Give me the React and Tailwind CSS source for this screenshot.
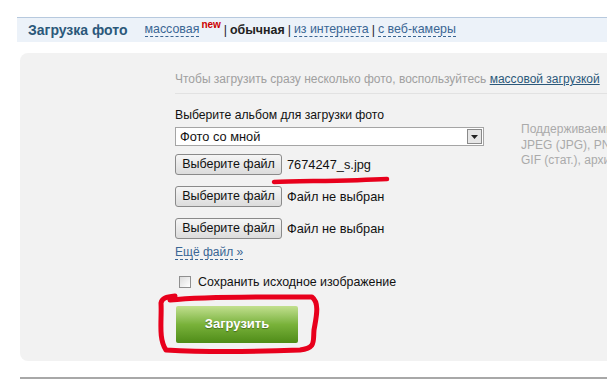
import React from "react";

function FileRow({ name }) {
  return (
    <div className="flex items-center h-[21px]">
      <button className="h-[21px] w-[107px] rounded-[3px] border border-[#8a8a8a] bg-gradient-to-b from-[#f6f6f6] to-[#dcdcdc] text-[12.5px] text-[#111] leading-none">
        Выберите файл
      </button>
      <span className="ml-[5px] text-[12.8px] text-[#111]">{name}</span>
    </div>
  );
}

export default function App() {
  return (
    <div
      className="relative w-[607px] h-[392px] overflow-hidden bg-white pt-[17px]"
      style={{ fontFamily: '"Liberation Sans", Arial, sans-serif' }}
    >
      {/* header bar */}
      <div className="ml-[17px] h-[25px] border-t border-[#b7c9de] bg-[#ecf2f9] flex items-center pl-[11px] whitespace-nowrap">
        <span className="text-[14px] font-bold text-[#2b587a]">Загрузка фото</span>
        <div className="ml-[17px] flex items-center text-[12.4px] text-[#222]">
          <span className="text-[#3a6694] border-b border-dashed border-[#3a6694] leading-[13px]">массовая</span>
          <sup className="text-[10px] font-bold text-[#c00] -top-[5px] ml-[2px]">new</sup>
          <span className="mx-[3px]">|</span>
          <span className="font-bold">обычная</span>
          <span className="mx-[3px]">|</span>
          <span className="text-[#3a6694] border-b border-dashed border-[#3a6694] leading-[13px]">из интернета</span>
          <span className="mx-[3px]">|</span>
          <span className="text-[#3a6694] border-b border-dashed border-[#3a6694] leading-[13px]">с веб-камеры</span>
        </div>
      </div>

      {/* gray panel */}
      <div className="ml-[20px] mt-[11px] h-[308px] rounded-l-[8px] bg-[#f2f2f2] pl-[155px] pt-[19px] flex">
        <div className="w-[346px] shrink-0">
          <div className="whitespace-nowrap text-[12px] text-[#a0a0a0] h-[14px] leading-[14px]">
            Чтобы загрузить сразу несколько фото, воспользуйтесь{" "}
            <span className="text-[#2b587a] underline">массовой загрузкой</span>
          </div>
          <div className="mt-[7px] w-[432px] border-t border-[#e2e2e2]" />
          <div className="mt-[14px] text-[12.2px] text-[#111] leading-[14px] whitespace-nowrap">
            Выберите альбом для загрузки фото
          </div>
          <div className="mt-[5px] w-[309px] h-[19px] border border-[#a5a5a5] bg-white flex items-center">
            <span className="flex-1 pl-[4px] text-[12.8px] text-[#111]">Фото со мной</span>
            <div className="w-[15px] h-[15px] mr-[1px] border border-[#8a8a8a] bg-[#e6e6e6] flex items-center justify-center">
              <svg width="7" height="4" viewBox="0 0 7 4">
                <path d="M0 0h7L3.5 4z" fill="#222" />
              </svg>
            </div>
          </div>
          <div className="mt-[8px] flex flex-col gap-[11px]">
            <FileRow name="7674247_s.jpg" />
            <FileRow name="Файл не выбран" />
            <FileRow name="Файл не выбран" />
          </div>
          <div className="mt-[6px] text-[12px] leading-[14px]">
            <span className="text-[#3a6694] border-b border-dashed border-[#3a6694]">Ещё файл »</span>
          </div>
          <div className="mt-[14px] ml-[4px] flex items-center">
            <span className="w-[12px] h-[12px] border border-[#8f8f8f] bg-gradient-to-br from-[#dcdcdc] to-white" />
            <span className="ml-[7px] text-[12.4px] text-[#111]">Сохранить исходное изображение</span>
          </div>
          <button className="mt-[14px] ml-[1px] w-[122px] h-[37px] rounded-[2px] bg-gradient-to-b from-[#c2e08e] via-[#79b23a] to-[#4f8c17] text-[13px] font-bold text-white [text-shadow:0_1px_1px_rgba(0,0,0,0.35)]">
            Загрузить
          </button>
        </div>
        <div className="pt-[50px] text-[12px] leading-[15.5px] text-[#aaa] whitespace-nowrap">
          <div>Поддерживаемые форматы:</div>
          <div>JPEG (JPG), PNG,</div>
          <div>GIF (стат.), архивы</div>
        </div>
      </div>

      {/* bottom rule */}
      <div className="ml-[20px] mt-[16px] h-[2px] bg-[#a8a8a8]" />

      {/* red marker annotations */}
      <svg className="absolute left-0 top-0 pointer-events-none" width="607" height="392">
        <path d="M274 182 C300 181 350 181 387 179" stroke="#e8001c" strokeWidth="4.5" fill="none" strokeLinecap="round" />
        <path
          d="M170 300 C210 296 270 297 312 297 C320 303 316 318 314 330 C313 342 316 348 300 350 C250 352 200 352 166 350 C158 338 162 320 161 303 C162 298 166 297 175 296"
          stroke="#e8001c"
          strokeWidth="5"
          fill="none"
          strokeLinecap="round"
          strokeLinejoin="round"
        />
      </svg>
    </div>
  );
}
